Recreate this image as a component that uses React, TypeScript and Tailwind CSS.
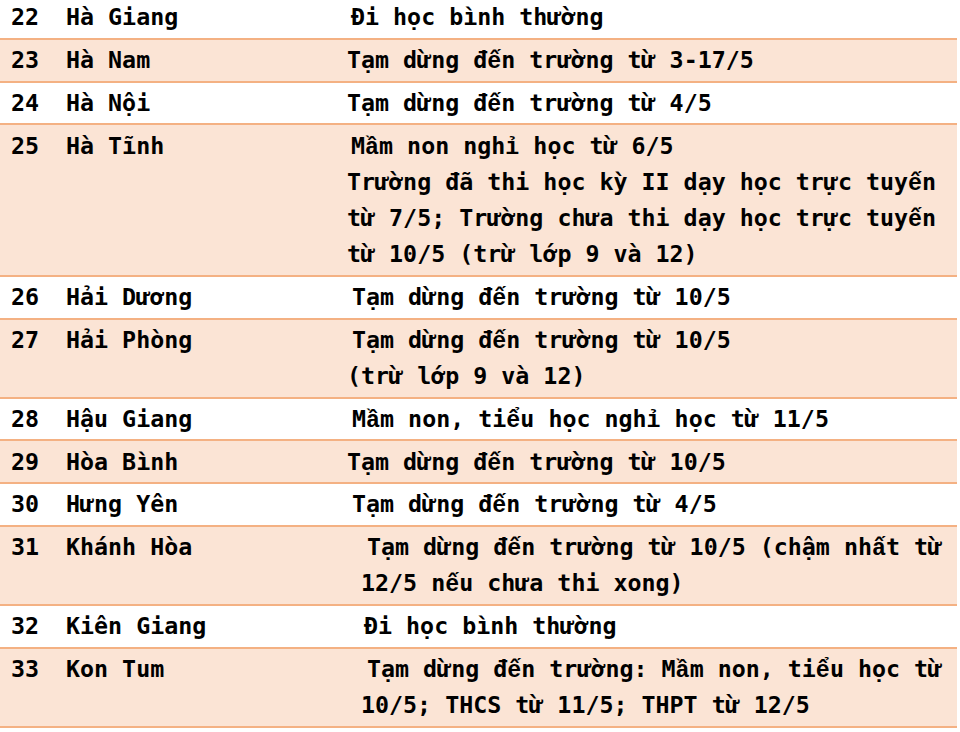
import React from "react";

type Line = { text: string; pl: number };
type Row = { n: string; name: string; lines: Line[]; shade: boolean };

const rows: Row[] = [
  { n: "22", name: "Hà Giang", shade: false, lines: [{ text: "Đi học bình thường", pl: 11 }] },
  { n: "23", name: "Hà Nam", shade: true, lines: [{ text: "Tạm dừng đến trường từ 3-17/5", pl: 7 }] },
  { n: "24", name: "Hà Nội", shade: false, lines: [{ text: "Tạm dừng đến trường từ 4/5", pl: 7 }] },
  {
    n: "25",
    name: "Hà Tĩnh",
    shade: true,
    lines: [
      { text: "Mầm non nghỉ học từ 6/5", pl: 11 },
      { text: "Trường đã thi học kỳ II dạy học trực tuyến", pl: 7 },
      { text: "từ 7/5; Trường chưa thi dạy học trực tuyến", pl: 7 },
      { text: "từ 10/5 (trừ lớp 9 và 12)", pl: 7 },
    ],
  },
  { n: "26", name: "Hải Dương", shade: false, lines: [{ text: "Tạm dừng đến trường từ 10/5", pl: 12 }] },
  {
    n: "27",
    name: "Hải Phòng",
    shade: true,
    lines: [
      { text: "Tạm dừng đến trường từ 10/5", pl: 12 },
      { text: "(trừ lớp 9 và 12)", pl: 7 },
    ],
  },
  { n: "28", name: "Hậu Giang", shade: false, lines: [{ text: "Mầm non, tiểu học nghỉ học từ 11/5", pl: 12 }] },
  { n: "29", name: "Hòa Bình", shade: true, lines: [{ text: "Tạm dừng đến trường từ 10/5", pl: 7 }] },
  { n: "30", name: "Hưng Yên", shade: false, lines: [{ text: "Tạm dừng đến trường từ 4/5", pl: 12 }] },
  {
    n: "31",
    name: "Khánh Hòa",
    shade: true,
    lines: [
      { text: "Tạm dừng đến trường từ 10/5 (chậm nhất từ", pl: 27 },
      { text: "12/5 nếu chưa thi xong)", pl: 21 },
    ],
  },
  { n: "32", name: "Kiên Giang", shade: false, lines: [{ text: "Đi học bình thường", pl: 24 }] },
  {
    n: "33",
    name: "Kon Tum",
    shade: true,
    lines: [
      { text: "Tạm dừng đến trường: Mầm non, tiểu học từ", pl: 27 },
      { text: "10/5; THCS từ 11/5; THPT từ 12/5", pl: 21 },
    ],
  },
];

const FIX = "ầấẩẫếềểễốồổỗỉẦẤẨẪẾỀỂỄỐỒỔỖỈ";

function VText({ text }: { text: string }) {
  const parts: React.ReactNode[] = [];
  let buf = "";
  let k = 0;
  for (const ch of text.normalize("NFC")) {
    if (FIX.includes(ch)) {
      if (buf) parts.push(buf);
      buf = "";
      parts.push(
        <span
          key={k++}
          className="leading-none tracking-[0.05px]"
          style={{ fontFamily: '"Liberation Mono", monospace' }}
        >
          {ch}
        </span>
      );
    } else {
      buf += ch;
    }
  }
  if (buf) parts.push(buf);
  return <>{parts}</>;
}

export default function App() {
  return (
    <div className="w-[960px] h-[732px] overflow-hidden bg-white">
      <div
        className="w-[957px] -mt-[3px] text-[23.3px] leading-[36.2px] font-bold text-black"
        style={{ fontFamily: '"DejaVu Sans Mono", "Liberation Mono", monospace' }}
      >
        {rows.map((r) => (
          <div
            key={r.n}
            className={`flex pt-[2.3px] pb-[2.3px] border-b-2 border-[#f4b183] ${r.shade ? "bg-[#fbe4d5]" : "bg-white"}`}
          >
            <div className="w-[66px] pl-[11px] shrink-0 whitespace-pre">{r.n}</div>
            <div className="w-[274px] shrink-0 whitespace-pre">{r.name}</div>
            <div className="flex-1 flex flex-col">
              {r.lines.map((l, i) => (
                <div key={i} className="whitespace-pre" style={{ paddingLeft: l.pl }}>
                  <VText text={l.text} />
                </div>
              ))}
            </div>
          </div>
        ))}
      </div>
    </div>
  );
}
